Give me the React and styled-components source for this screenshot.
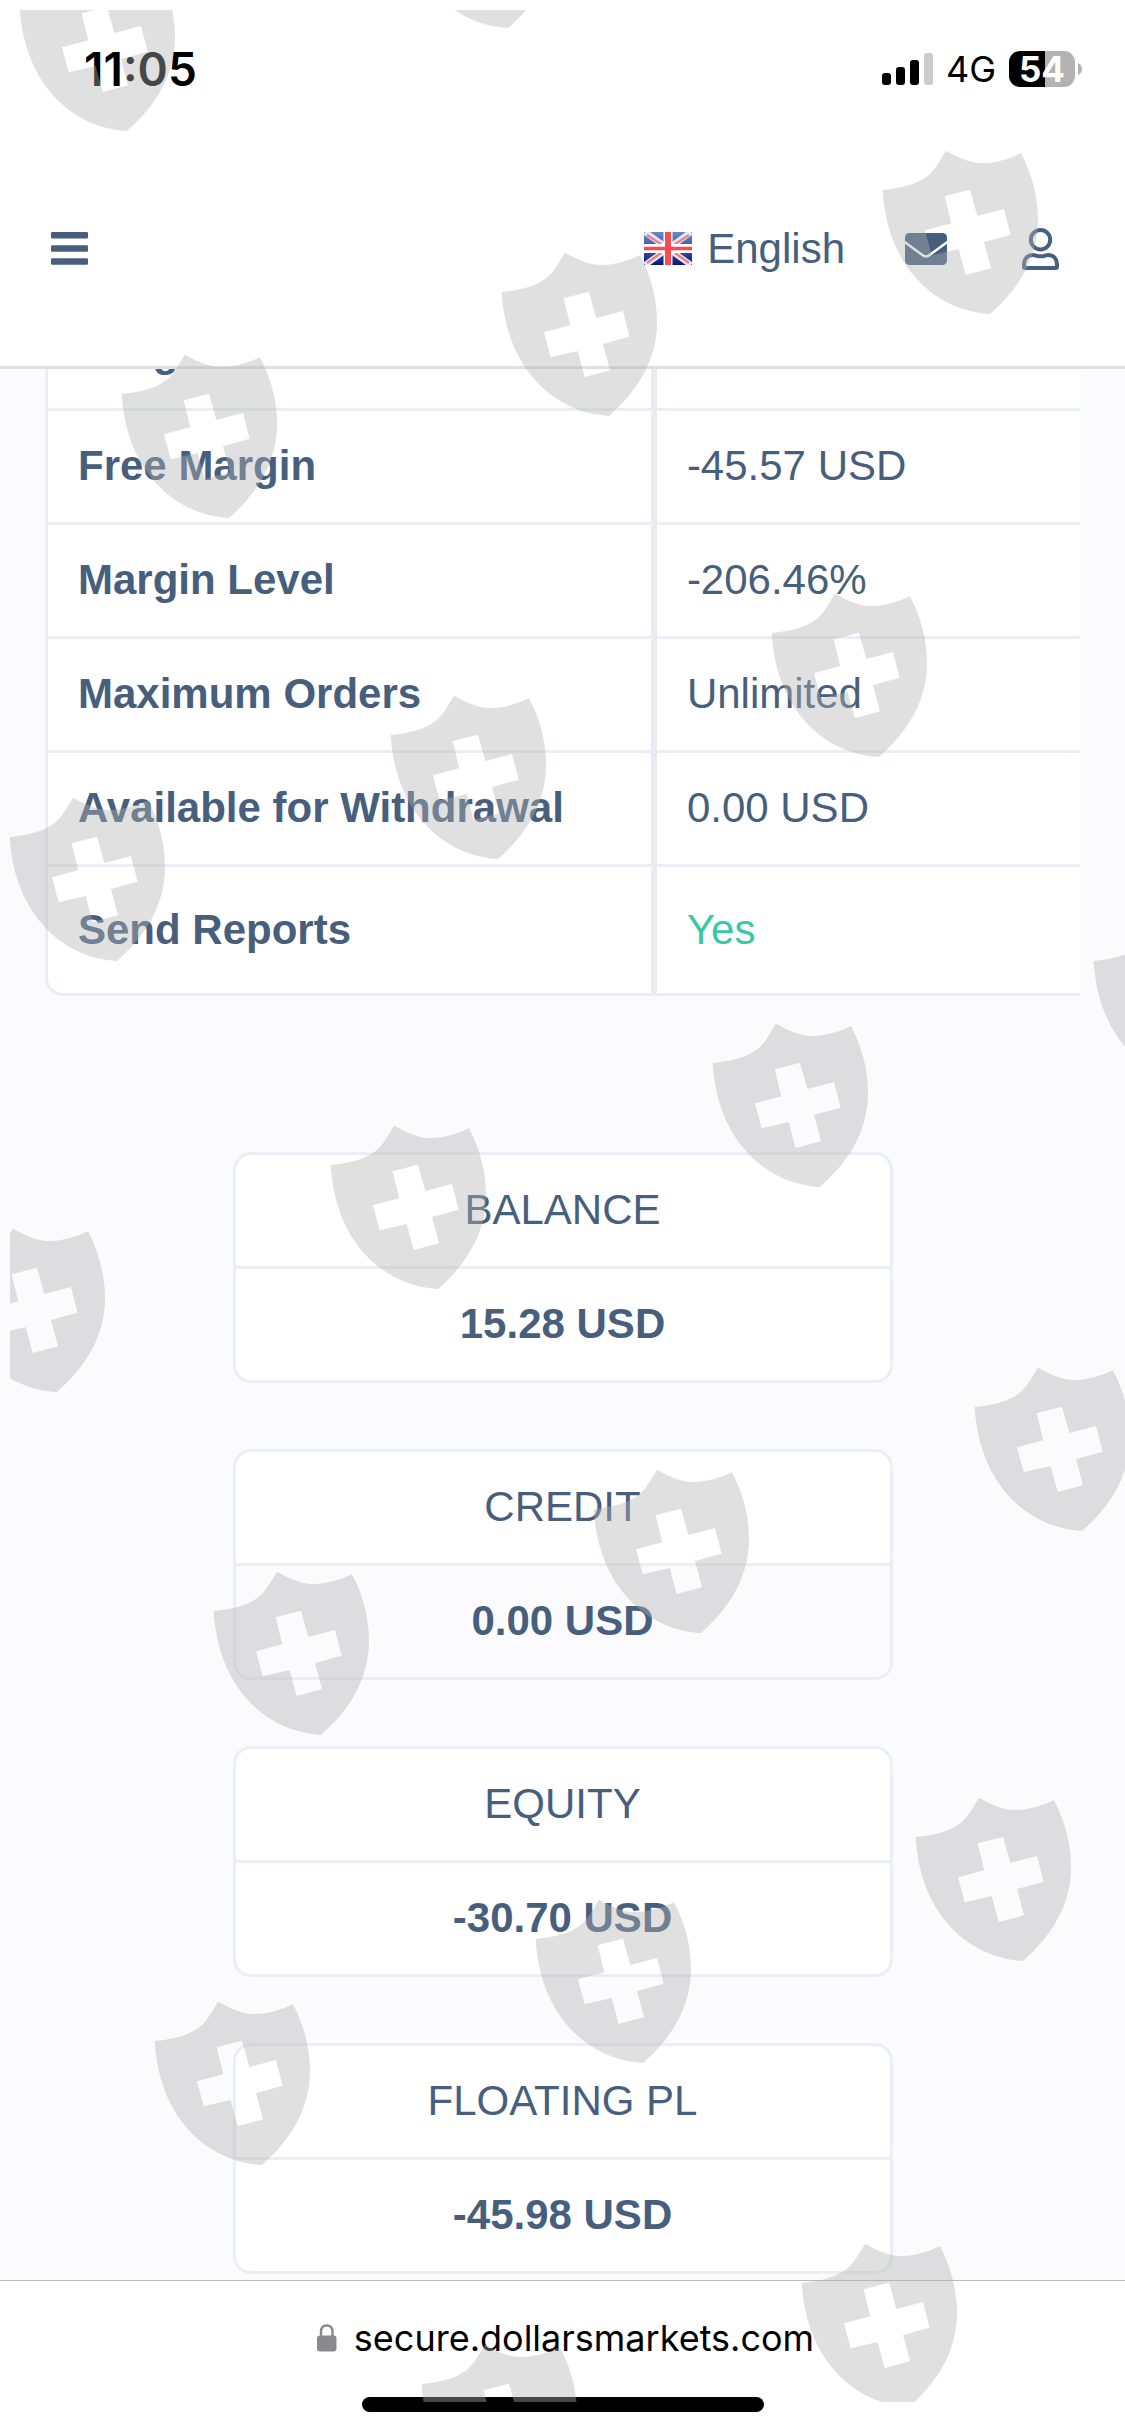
import React from "react";
import styled, { createGlobalStyle } from "styled-components";

const GlobalStyle = createGlobalStyle`
  *, *::before, *::after { box-sizing: border-box; }
  body { margin: 0; background: #fbfbfe; }
`;

const ink = "#475f7d";
const line = "#e9eff5";
const page = "#fbfbfe";
const systemFont = `Inter, "Liberation Sans", sans-serif`;

const Screen = styled.div`
  position: relative;
  display: flex;
  flex-direction: column;
  min-height: 100vh;
  background: ${page};
  color: ${ink};
  font: 400 42px/48px "Liberation Sans", Arial, sans-serif;
`;

const Header = styled.header`
  background: #fff;
  border-bottom: 3px solid #dde1e6;
`;

const StatusBar = styled.div`
  display: flex;
  align-items: center;
  height: 138px;
  padding: 0 43px 0 84px;
  color: #000;
  font-family: ${systemFont};
`;

const Clock = styled.time`
  margin-right: auto;
  font-size: 46px;
  font-weight: 600;
`;

const Network = styled.span`
  margin: 0 13px;
  font-size: 36px;
`;

const Battery = styled.span`
  width: 66px;
  height: 36px;
  border-radius: 11px;
  background: linear-gradient(90deg, #000 54%, #b3b3b3 54%);
  color: #fff;
  font-size: 35px;
  font-weight: 700;
  line-height: 36px;
  text-align: center;
`;

const NavBar = styled.nav`
  display: flex;
  align-items: center;
  height: 228px;
  padding: 0 66px 7px 51px;
`;

const NavButton = styled.button`
  display: flex;
  align-items: center;
  gap: 15px;
  margin: 0 ${(p) => p.$after || 0}px 0 0;
  padding: 0;
  border: 0;
  background: none;
  color: inherit;
  font: inherit;
  cursor: pointer;
`;

const Spacer = styled.span`
  flex: 1;
`;

const Main = styled.main`
  flex: 1;
  overflow: hidden;
  padding-bottom: 6px;
`;

const TableFrame = styled.div`
  margin: -75px 45px 156px;
  border: solid ${line};
  border-width: 3px 0 3px 3px;
  border-radius: 18px 0 0 18px;
  background: #fff;
  overflow: hidden;
`;

const Table = styled.table`
  width: 100%;
  border-collapse: separate;
  border-spacing: 0;
  table-layout: fixed;
`;

const Row = styled.tr`
  & > * {
    height: ${(p) => (p.$last ? 126 : 114)}px;
    border-bottom: ${(p) => (p.$last ? 0 : 3)}px solid ${line};
    padding: 0 0 1px 30px;
    text-align: left;
    vertical-align: middle;
  }
`;

const Label = styled.th`
  width: 59%;
  border-right: 6px solid #e8ebef;
  font-weight: 700;
`;

const ReportLink = styled.a`
  color: #38c9a6;
  text-decoration: none;
`;

const Cards = styled.div`
  display: flex;
  flex-direction: column;
  align-items: center;
  gap: 66px;
`;

const Card = styled.section`
  width: 660px;
  max-width: 90%;
  border: 3px solid ${line};
  border-radius: 18px;
  background: #fff;
  overflow: hidden;
  text-align: center;
`;

const CardTitle = styled.h2`
  margin: 0;
  padding: 31px 0 32px;
  border-bottom: 3px solid ${line};
  font-size: 42px;
  font-weight: 400;
`;

const CardValue = styled.p`
  margin: 0;
  padding: 31px 0 32px;
  background: ${(p) => (p.$muted ? page : "#fff")};
  font-weight: 700;
`;

const Footer = styled.footer`
  display: flex;
  flex-direction: column;
  align-items: center;
  gap: 35px;
  height: 156px;
  padding-top: 33px;
  border-top: 1px solid #b9b9bb;
  background: #fff;
`;

const AddressButton = styled.button`
  display: flex;
  align-items: center;
  gap: 17px;
  padding: 0 0 0 6px;
  border: 0;
  background: none;
  color: #000;
  font: 400 36px/48px ${systemFont};
`;

const HomeIndicator = styled.div`
  width: 402px;
  height: 15px;
  border-radius: 8px;
  background: #000;
`;

const Overlay = styled.svg`
  position: absolute;
  top: 10px;
  left: 10px;
  width: calc(100% - 10px);
  height: calc(100% - 44px);
  overflow: hidden;
  pointer-events: none;
`;

const accountRows = [
  ["Margin", ""],
  ["Free Margin", "-45.57 USD"],
  ["Margin Level", "-206.46%"],
  ["Maximum Orders", "Unlimited"],
  ["Available for Withdrawal", "0.00 USD"],
];

const cards = [
  { title: "BALANCE", value: "15.28 USD" },
  { title: "CREDIT", value: "0.00 USD", muted: true },
  { title: "EQUITY", value: "-30.70 USD" },
  { title: "FLOATING PL", value: "-45.98 USD" },
];

// Bottom tip of every shield, relative to the screen.
const shields = [
  [127, 131], [508, 28], [990, 314], [609, 416], [229, 518],
  [879, 757], [498, 859], [117, 961], [1201, 1085], [820, 1187],
  [438, 1289], [57, 1392], [1082, 1531], [701, 1633], [321, 1735],
  [1023, 1961], [643, 2063], [262, 2165], [909, 2407], [529, 2508],
];

function Shields() {
  return (
    <Overlay aria-hidden="true">
      <defs>
        <path
          id="shield"
          fillRule="evenodd"
          transform="scale(.33333) translate(-359 -561)"
          d="M37 189C105 183 155 166 181 139C199 120 210 98 227 71C275 98 305 108 340 108C375 108 415 96 452 79C488 148 503 215 503 280C503 390 447 485 359 561C195 552 50 420 37 189ZM223 208L243 289L164 310L184 385L265 366L286 444L362 424L341 345L421 323L401 246L321 267L299 188Z"
        />
      </defs>
      <g fill="#b1b1b1" fillOpacity=".4">
        {shields.map(([x, y]) => (
          <use key={`${x}-${y}`} href="#shield" x={x - 10} y={y - 10} />
        ))}
      </g>
    </Overlay>
  );
}

function SignalIcon() {
  return (
    <svg width="51" height="32" viewBox="0 0 51 32" aria-hidden="true">
      <rect x="0" y="20" width="9" height="12" rx="3" />
      <rect x="14" y="14" width="9" height="18" rx="3" />
      <rect x="28" y="7" width="9" height="25" rx="3" />
      <rect x="42" y="0" width="9" height="32" rx="3" fill="#ccc" />
    </svg>
  );
}

function BatteryTip() {
  return (
    <svg width="7" height="12" viewBox="0 0 7 12" aria-hidden="true">
      <path d="M3 0Q7 2 7 6T3 12Z" fill="#b3b3b3" />
    </svg>
  );
}

function MenuIcon() {
  return (
    <svg width="37" height="33" viewBox="0 0 37 33" fill={ink} aria-hidden="true">
      <rect width="37" height="6.5" rx="1.2" />
      <rect y="13.2" width="37" height="6.5" rx="1.2" />
      <rect y="26.2" width="37" height="6.5" rx="1.2" />
    </svg>
  );
}

function FlagIcon() {
  return (
    <svg width="48" height="33" viewBox="0 0 48 33" aria-hidden="true">
      <defs>
        <linearGradient id="navy" x1="0" y1="0" x2="0" y2="1">
          <stop offset="0" stopColor="#6a88c6" />
          <stop offset=".5" stopColor="#3a57a8" />
          <stop offset="1" stopColor="#06187c" />
        </linearGradient>
      </defs>
      <rect width="48" height="33" fill="url(#navy)" />
      <path d="M1 0L47 33M47 0L1 33" stroke="#e6e8f4" strokeWidth="6" />
      <path d="M3 3L17 12M45 3L31 12M3 31L17 21M45 31L31 21" stroke="#f08088" strokeWidth="2.5" />
      <path d="M24 0V33M0 16.500H48" stroke="#fff" strokeWidth="9" />
      <path d="M24 0V33" stroke="#fb4a50" strokeWidth="6" />
      <path d="M0 16.500H48" stroke="#fb4a50" strokeWidth="3.500" />
    </svg>
  );
}

function MailIcon() {
  return (
    <svg width="42" height="32" viewBox="0 0 42 32" aria-hidden="true">
      <rect width="42" height="32" rx="4.500" fill={ink} />
      <path d="M-1 8.500L17 21.800Q21 25 25 21.800L43 8.500" fill="none" stroke="#fff" strokeWidth="2.400" />
    </svg>
  );
}

function UserIcon() {
  return (
    <svg width="37" height="42" viewBox="0 0 37 42" fill="none" stroke={ink} strokeWidth="4" aria-hidden="true">
      <circle cx="18.500" cy="11.700" r="9.700" />
      <path d="M11 27C13.500 27 14.500 28.300 18.500 28.300S23.500 27 26 27C32 27 35 31.500 35 36.500V38.500Q35 40 33.500 40H3.500Q2 40 2 38.500V36.500C2 31.500 5 27 11 27Z" />
    </svg>
  );
}

function LockIcon() {
  return (
    <svg width="20" height="28" viewBox="0 0 20 28" aria-hidden="true">
      <rect y="11.500" width="19.500" height="16" rx="3" fill="#8a8a8e" />
      <path d="M4 13V8Q4 1.500 9.750 1.500T15.500 8V13" fill="none" stroke="#8a8a8e" strokeWidth="2.400" />
    </svg>
  );
}

export default function App() {
  return (
    <Screen>
      <GlobalStyle />
      <Header>
        <StatusBar>
          <Clock>11:05</Clock>
          <SignalIcon />
          <Network>4G</Network>
          <Battery>54</Battery>
          <BatteryTip />
        </StatusBar>
        <NavBar>
          <NavButton type="button" aria-label="Menu">
            <MenuIcon />
          </NavButton>
          <Spacer />
          <NavButton type="button" $after={60}>
            <FlagIcon />
            English
          </NavButton>
          <NavButton type="button" aria-label="Messages" $after={75}>
            <MailIcon />
          </NavButton>
          <NavButton type="button" aria-label="Profile">
            <UserIcon />
          </NavButton>
        </NavBar>
      </Header>
      <Main>
        <TableFrame>
          <Table>
            <tbody>
              {accountRows.map(([label, value]) => (
                <Row key={label}>
                  <Label scope="row">{label}</Label>
                  <td>{value}</td>
                </Row>
              ))}
              <Row $last>
                <Label scope="row">Send Reports</Label>
                <td>
                  <ReportLink href="#reports">Yes</ReportLink>
                </td>
              </Row>
            </tbody>
          </Table>
        </TableFrame>
        <Cards>
          {cards.map((card) => (
            <Card key={card.title}>
              <CardTitle>{card.title}</CardTitle>
              <CardValue $muted={card.muted}>{card.value}</CardValue>
            </Card>
          ))}
        </Cards>
      </Main>
      <Footer>
        <AddressButton type="button">
          <LockIcon />
          secure.dollarsmarkets.com
        </AddressButton>
        <HomeIndicator />
      </Footer>
      <Shields />
    </Screen>
  );
}
